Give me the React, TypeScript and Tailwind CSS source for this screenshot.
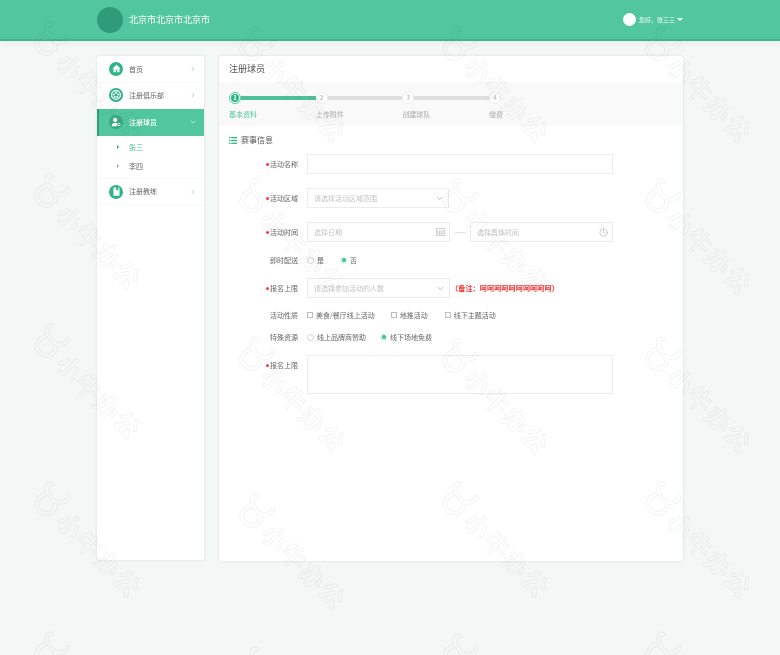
import { ChevronRight, ChevronDown, Clock } from "lucide-react";
import type { ReactNode } from "react";

const marks: [number, number][] = [
  [32, 20], [32, 172], [32, 322], [32, 480], [32, 630],
  [237, 25], [237, 177], [237, 335], [237, 492], [237, 645],
  [440, 25], [440, 177], [440, 337], [440, 480], [440, 632],
  [643, 25], [643, 177], [643, 335], [643, 480], [643, 630],
];

function Watermark({ x, y }: { x: number; y: number }) {
  return (
    <div className="absolute w-[110px] h-[130px]" style={{ left: x, top: y }}>
      <svg width="40" height="40" viewBox="0 0 40 40" className="absolute left-0 top-0" fill="none">
        <mask id={`m${x}-${y}`} maskUnits="userSpaceOnUse" x="0" y="0" width="40" height="40">
          <rect width="40" height="40" fill="white" />
          <path d="M20 4C15 3 14 7 16 12C19 20 24 25 31 22C34 21 36 19 36 17M16 12L7 18L4 25L9 32L17 34L23 29L24 22" stroke="black" strokeWidth="2.6" strokeLinecap="round" strokeLinejoin="round" />
        </mask>
        <path mask={`url(#m${x}-${y})`} d="M20 4C15 3 14 7 16 12C19 20 24 25 31 22C34 21 36 19 36 17M16 12L7 18L4 25L9 32L17 34L23 29L24 22" stroke="#000" strokeOpacity="0.05" strokeWidth="4.6" strokeLinecap="round" strokeLinejoin="round" />
      </svg>
      <div className="absolute left-[13px] top-[62px] w-[114px] rotate-45 text-[25px] leading-[28px] font-bold tracking-[2px] whitespace-nowrap text-transparent [-webkit-text-stroke:1px_rgba(0,0,0,0.05)]">
        小牛办公
      </div>
    </div>
  );
}

function Circle({ children, dark }: { children: ReactNode; dark?: boolean }) {
  return (
    <span className={`flex w-[14px] h-[14px] shrink-0 items-center justify-center rounded-full ${dark ? "bg-[#3aa883]" : "bg-[#2fb388]"}`}>
      {children}
    </span>
  );
}

function MenuRow({ icon, label, active }: { icon: ReactNode; label: string; active?: boolean }) {
  return (
    <div
      className={`flex items-center h-[26.6px] pr-[7px] ${
        active
          ? "bg-[#52c69e] border-l-2 border-[#2f9e7a] pl-[10px] text-white font-medium"
          : "pl-[12px] border-b border-[#f8f8f8] text-[#666]"
      }`}
    >
      <Circle dark={active}>{icon}</Circle>
      <span className="ml-[6px] flex-1 text-[7px]">{label}</span>
      {active ? (
        <ChevronDown size={8} className="text-white" />
      ) : (
        <ChevronRight size={8} className="text-[#bbb]" />
      )}
    </div>
  );
}

function Step({ n, label, active, last }: { n: string; label: string; active?: boolean; last?: boolean }) {
  return (
    <div className={last ? "w-[20px]" : "w-[86.7px]"}>
      <div className="flex items-center h-[12px]">
        {active ? (
          <span className="flex w-[12px] h-[12px] shrink-0 items-center justify-center rounded-full border border-[#52c69e] bg-white">
            <span className="flex w-[8px] h-[8px] items-center justify-center rounded-full bg-[#2fb388] text-[6px] leading-none text-white font-bold">{n}</span>
          </span>
        ) : (
          <span className="flex w-[12px] h-[12px] shrink-0 items-center justify-center rounded-full bg-white text-[6px] leading-none text-[#c4c4c4] border border-[#ececec] font-bold">{n}</span>
        )}
        {!last && <span className={`h-[4.5px] flex-1 ${active ? "bg-[#4fc09a]" : "bg-[#dedede]"}`} />}
      </div>
      <div className={`mt-[5px] text-[7px] leading-[10px] whitespace-nowrap ${active ? "text-[#52c69e]" : "text-[#aaa]"}`}>{label}</div>
    </div>
  );
}

function Label({ text, req }: { text: string; req?: boolean }) {
  return (
    <div className="w-[79px] mr-[9px] shrink-0 text-right text-[7px] leading-[10px] text-[#666]">
      {req && <span className="inline-block w-[2.5px] h-[2.5px] mr-[1.5px] mb-[1px] rounded-full bg-[#f43f3f] align-middle" />}
      {text}
    </div>
  );
}

function Box({ w, placeholder, icon }: { w: string; placeholder?: string; icon?: ReactNode }) {
  return (
    <div className={`flex items-center justify-between h-[20px] ${w} border border-[#ececec] bg-white pl-[6px] pr-[4px]`}>
      <span className="text-[7px] text-[#c4c4c4]">{placeholder}</span>
      {icon}
    </div>
  );
}

function Radio({ on }: { on?: boolean }) {
  return on ? (
    <span className="flex w-[7px] h-[7px] items-center justify-center rounded-full bg-[#d5f1e7]">
      <span className="w-[4px] h-[4px] rounded-full bg-[#43bd94]" />
    </span>
  ) : (
    <span className="w-[7px] h-[7px] rounded-full border border-[#cfcfcf] bg-white" />
  );
}

function Opt({ control, text, className }: { control: ReactNode; text: string; className?: string }) {
  return (
    <div className={`flex items-center gap-[3px] text-[7px] leading-[10px] text-[#666] ${className ?? ""}`}>
      {control}
      <span>{text}</span>
    </div>
  );
}

const Check = () => <span className="w-[6px] h-[6px] border border-[#bdbdbd] bg-white" />;

const selectArrow = <ChevronDown size={9} className="text-[#aaa]" />;

export default function App() {
  return (
    <div className="relative w-[780px] h-[655px] overflow-hidden bg-[#f3f7f6] blur-[0.35px] font-['Noto_Sans_CJK_SC',sans-serif]">
      <header className="flex items-center justify-between h-[41px] pl-[97px] pr-[97px] bg-[#52c69e] border-b-2 border-[#45b48e] shadow-[0_2px_6px_rgba(0,0,0,0.05)]">
        <div className="flex items-center">
          <span className="w-[26px] h-[26px] rounded-full bg-[#2f9b78]" />
          <span className="ml-[6px] text-[9px] text-white">北京市北京市北京市</span>
        </div>
        <div className="flex items-center">
          <span className="w-[13px] h-[13px] rounded-full bg-white" />
          <span className="ml-[3px] text-[6px] text-white">您好，张三三</span>
          <span className="ml-[2px] w-0 h-0 border-x-[3px] border-x-transparent border-t-[3px] border-t-white" />
        </div>
      </header>

      <div className="flex gap-[15px] pl-[97px] pt-[15px]">
        <aside className="w-[107px] h-[504px] rounded-[3px] bg-white shadow-[0_0_3px_rgba(0,0,0,0.1)] overflow-hidden">
          <MenuRow
            label="首页"
            icon={
              <svg width="9" height="9" viewBox="0 0 24 24" fill="#fff">
                <path d="M12 2 1 12h3v10h6v-7h4v7h6V12h3z" />
              </svg>
            }
          />
          <MenuRow
            label="注册俱乐部"
            icon={
              <svg width="12" height="12" viewBox="0 0 24 24" fill="#fff">
                <path fillRule="evenodd" d="M12 2a10 10 0 1 0 0 20 10 10 0 0 0 0-20zm0 2.5a7.5 7.5 0 1 1 0 15 7.5 7.5 0 0 1 0-15z" />
                <circle cx="12" cy="7.5" r="2.2" />
                <circle cx="7.7" cy="11" r="2.2" />
                <circle cx="16.3" cy="11" r="2.2" />
                <circle cx="9.3" cy="16" r="2.2" />
                <circle cx="14.7" cy="16" r="2.2" />
              </svg>
            }
          />
          <MenuRow
            active
            label="注册球员"
            icon={
              <svg width="10" height="10" viewBox="0 0 24 24" fill="#fff">
                <circle cx="10" cy="7" r="5" />
                <path d="M2 22c0-6 3-8 8-8 2 0 3 .3 4 1v7z" />
                <circle cx="19" cy="18" r="3" fill="none" stroke="#fff" strokeWidth="2" />
              </svg>
            }
          />
          <div className="flex items-center h-[22px] pl-[20px]">
            <span className="w-0 h-0 border-y-[2px] border-y-transparent border-l-[2px] border-l-[#2f9e7a]" />
            <span className="ml-[10px] text-[7px] text-[#43bd94]">张三</span>
          </div>
          <div className="flex items-center h-[21px] pl-[20px] pb-[3px] border-b border-[#f8f8f8]">
            <span className="w-0 h-0 border-y-[2px] border-y-transparent border-l-[2px] border-l-[#b9a0a0]" />
            <span className="ml-[10px] text-[7px] text-[#666]">李四</span>
          </div>
          <MenuRow
            label="注册教练"
            icon={
              <svg width="9" height="9" viewBox="0 0 24 24" fill="#fff">
                <path d="M4 1h16v22H4zM11 1v9l3-2.5 3 2.5V1z" fillRule="evenodd" />
              </svg>
            }
          />
        </aside>

        <main className="w-[464px] h-[505px] rounded-[3px] bg-white shadow-[0_0_3px_rgba(0,0,0,0.12)] overflow-hidden">
          <div className="flex items-center h-[26px] pl-[10px] text-[9px] text-[#555]">注册球员</div>
          <div className="flex h-[44px] pl-[10px] pt-[10px] bg-[#f9f9f9]">
            <Step n="1" label="基本资料" active />
            <Step n="2" label="上传附件" />
            <Step n="3" label="创建球队" />
            <Step n="4" label="缴费" last />
          </div>

          <div className="flex items-center h-[10px] mt-[9px] pl-[10px] text-[8px] text-[#555]">
            <svg width="8" height="7" viewBox="0 0 8 7" fill="#2fb388">
              <rect width="1.5" height="1.3" />
              <rect x="2.2" width="5.8" height="1.3" />
              <rect y="2.8" width="1.5" height="1.3" />
              <rect x="2.2" y="2.8" width="5.8" height="1.3" />
              <rect y="5.6" width="1.5" height="1.3" />
              <rect x="2.2" y="5.6" width="5.8" height="1.3" />
            </svg>
            <span className="ml-[4px]">赛事信息</span>
          </div>

          <div className="flex items-center mt-[9px]">
            <Label text="活动名称" req />
            <Box w="w-[306px]" />
          </div>
          <div className="flex items-center mt-[14px]">
            <Label text="活动区域" req />
            <Box w="w-[142px]" placeholder="请选择活动区域范围" icon={selectArrow} />
          </div>
          <div className="flex items-center mt-[14px]">
            <Label text="活动时间" req />
            <Box
              w="w-[143px]"
              placeholder="选择日期"
              icon={
                <svg width="9" height="8" viewBox="0 0 9 8" fill="none" stroke="#c8c8c8" strokeWidth="0.8">
                  <rect x="0.5" y="0.5" width="8" height="7" />
                  <path d="M0.5 3h8M0.5 5.2h8M3.2 3v4.5M5.8 3v4.5" />
                </svg>
              }
            />
            <span className="w-[11px] h-px mx-[4.5px] bg-[#e2e2e2]" />
            <Box w="w-[143px]" placeholder="选择具体时间" icon={<Clock size={9} className="text-[#bbb]" />} />
          </div>
          <div className="flex items-center h-[20px] mt-[8px]">
            <Label text="即时配送" />
            <Opt control={<Radio />} text="是" />
            <Opt control={<Radio on />} text="否" className="ml-[16px]" />
          </div>
          <div className="flex items-center mt-[8px]">
            <Label text="报名上限" req />
            <Box w="w-[143px]" placeholder="请选择参加活动的人数" icon={selectArrow} />
            <span className="ml-[1px] text-[7.2px] font-bold text-[#f52f2f] whitespace-nowrap">（备注：呵呵呵呵呵呵呵呵呵呵）</span>
          </div>
          <div className="flex items-center h-[12px] mt-[11px]">
            <Label text="活动性质" />
            <Opt control={<Check />} text="美食/餐厅线上活动" />
            <Opt control={<Check />} text="地推活动" className="ml-[16px]" />
            <Opt control={<Check />} text="线下主题活动" className="ml-[17px]" />
          </div>
          <div className="flex items-center h-[12px] mt-[10px]">
            <Label text="特殊资源" />
            <Opt control={<Radio />} text="线上品牌商赞助" />
            <Opt control={<Radio on />} text="线下场地免费" className="ml-[14px]" />
          </div>
          <div className="flex items-start mt-[12px]">
            <div className="pt-[5px]">
              <Label text="报名上限" req />
            </div>
            <div className="w-[306px] h-[39px] border border-[#ececec] bg-white" />
          </div>
        </main>
      </div>

      <div className="absolute inset-0 pointer-events-none">
        {marks.map(([x, y]) => (
          <Watermark key={`${x}-${y}`} x={x} y={y} />
        ))}
      </div>
    </div>
  );
}
